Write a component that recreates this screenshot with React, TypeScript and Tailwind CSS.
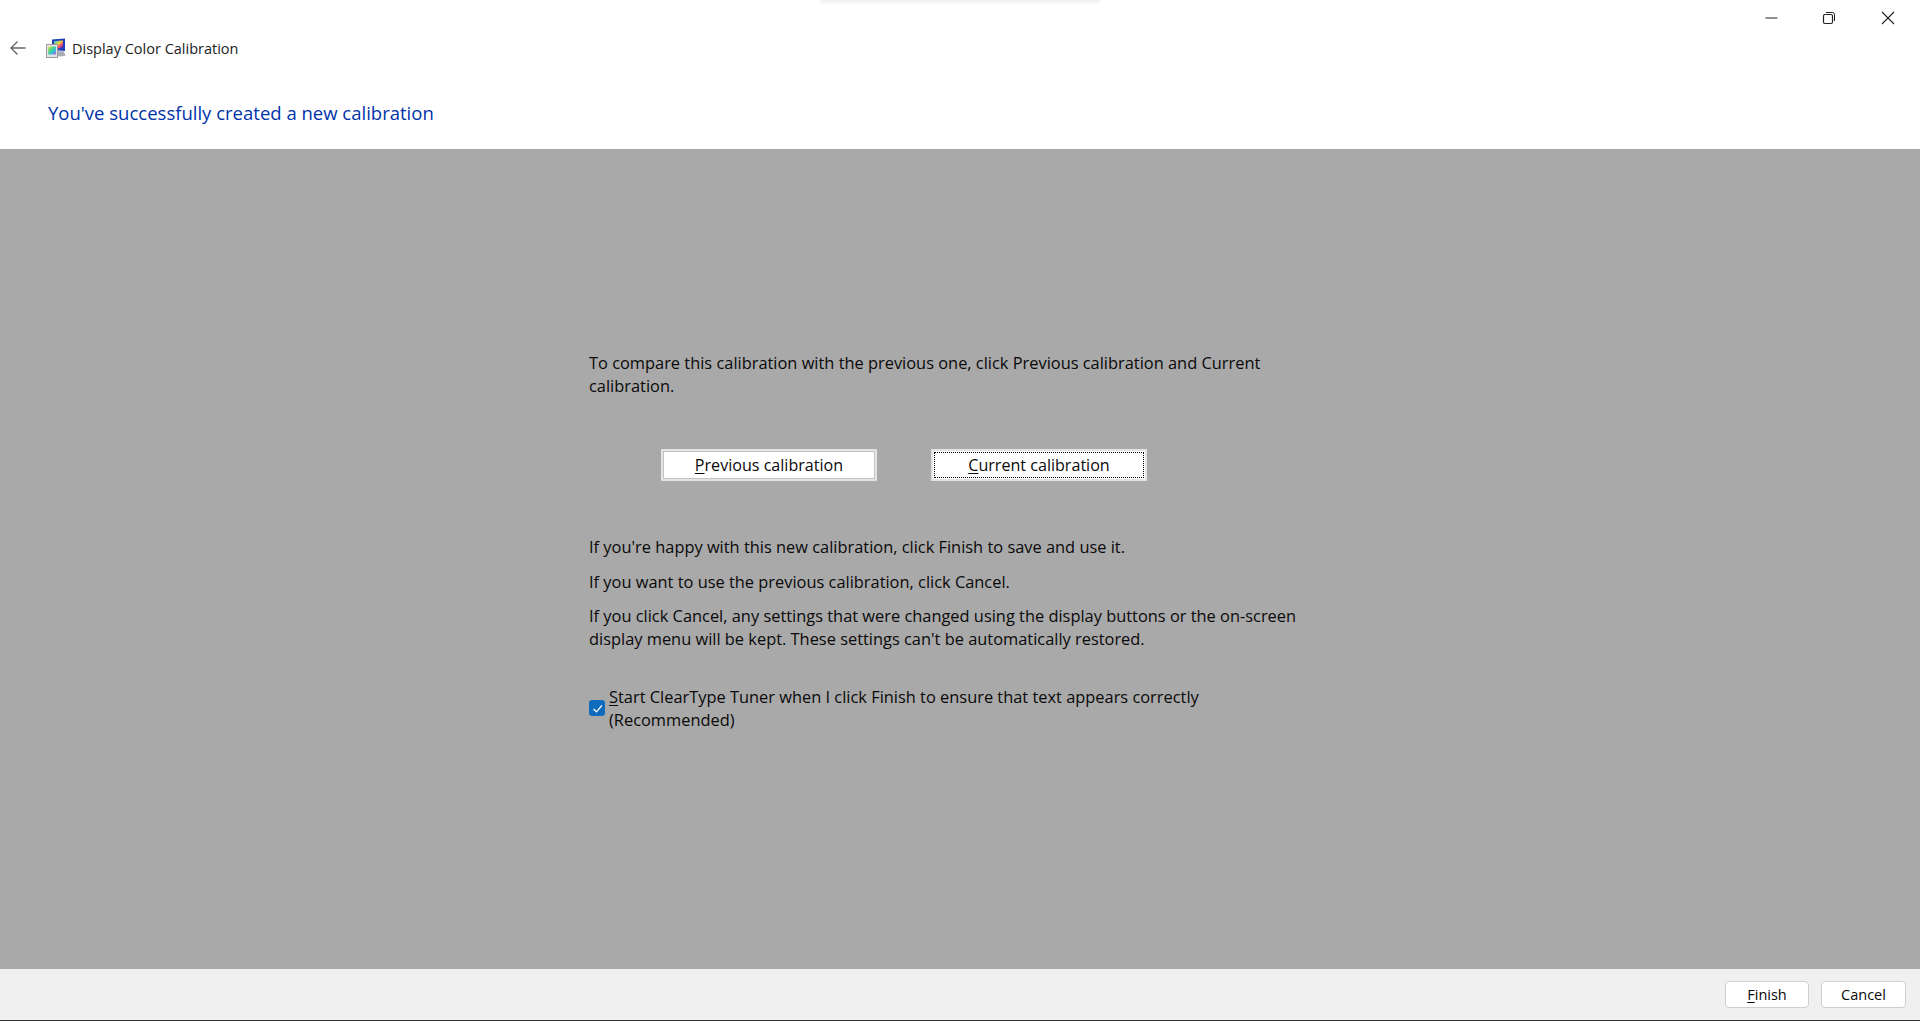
function Under({ c, rest }: { c: string; rest: string }) {
  return (
    <>
      <span className="underline underline-offset-2">{c}</span>
      {rest}
    </>
  );
}

function MonitorIcon() {
  return (
    <svg width="20" height="20" viewBox="0 0 20 20" className="shrink-0">
      <defs>
        <linearGradient id="scr" x1="0" y1="0" x2="1" y2="1">
          <stop offset="0" stopColor="#1fb6e8" />
          <stop offset="0.45" stopColor="#f5d33c" />
          <stop offset="0.7" stopColor="#e8417a" />
          <stop offset="1" stopColor="#1533c9" />
        </linearGradient>
        <linearGradient id="sq" x1="0" y1="0" x2="1" y2="1">
          <stop offset="0" stopColor="#f4e04a" />
          <stop offset="0.35" stopColor="#4fd67a" />
          <stop offset="0.7" stopColor="#32b8ea" />
          <stop offset="1" stopColor="#d94bb0" />
        </linearGradient>
      </defs>
      <path d="M6 1.5 L19 0.5 V13 L6 12 Z" fill="#1d3fb8" />
      <path d="M8 3 L17 2.5 V10.5 L8 10 Z" fill="url(#scr)" />
      <path d="M11 13 L18 13.5 L19.5 18 L12 18.5 Z" fill="#a8acb4" />
      <rect x="0.5" y="6.5" width="11" height="13" fill="#e4e4e4" stroke="#9a9a9a" />
      <rect x="2.2" y="8.5" width="7.8" height="8" fill="url(#sq)" />
    </svg>
  );
}

export default function App() {
  return (
    <div className="h-[1021px] w-[1920px] flex flex-col overflow-hidden bg-white text-[16.4px] leading-[23px] text-[#0a0a0a] font-['Open_Sans','Noto_Sans',sans-serif]">
      <header className="h-[149px] shrink-0 relative flex flex-col">
        <div className="absolute top-0 left-[820px] w-[280px] h-[6px] rounded-b-[40px] bg-gradient-to-b from-[#f0f0f0] to-white" />
        <div className="h-[18px] shrink-0 flex justify-end items-start pr-[22px] pt-[8px] gap-[38px]">
          <svg width="20" height="20" viewBox="0 0 20 20" className="shrink-0 -mr-[0px]"><path d="M3.5 10H15.5" stroke="#222" strokeWidth="1" /></svg>
          <svg width="20" height="20" viewBox="0 0 20 20" className="shrink-0"><rect x="3.5" y="6.5" width="9" height="9" rx="1.5" fill="none" stroke="#222" strokeWidth="1.2" /><path d="M6 4.5H12.5Q14.5 4.5 14.5 6.5V13" fill="none" stroke="#222" strokeWidth="1" /></svg>
          <svg width="20" height="20" viewBox="0 0 20 20" className="shrink-0"><path d="M4 4L16 16M16 4L4 16" stroke="#222" strokeWidth="1.1" /></svg>
        </div>
        <div className="flex items-center h-[62px] pl-[8px] -mt-[1px]">
          <svg width="20" height="20" viewBox="0 0 20 20"><path d="M17.5 10H3M9.5 3.5L3 10L9.5 16.5" fill="none" stroke="#666" strokeWidth="1.4" /></svg>
          <div className="ml-[18px] mr-[6px]"><MonitorIcon /></div>
          <span className="text-[14.5px] text-[#222]">Display Color Calibration</span>
        </div>
        <h1 className="pl-[48px] mt-[20px] text-[18.5px] leading-[28px] text-[#0033aa] font-normal">You've successfully created a new calibration</h1>
      </header>

      <main className="flex-1 bg-[#a9a9a9] pl-[589px] pt-[202px]">
        <div className="w-[716px]">
          <p>To compare this calibration with the previous one, click Previous calibration and Current calibration.</p>
          <div className="flex gap-[54px] ml-[72px] mt-[52px] text-[16.1px]">
            <button className="w-[216px] h-[32px] bg-white border-[2px] border-[#e4e4e4] rounded-[1px] flex items-center justify-center shadow-[inset_0_0_0_1px_#c4c4c4]">
              <span><Under c="P" rest="revious calibration" /></span>
            </button>
            <button className="w-[216px] h-[32px] bg-white border-[2px] border-[#e4e4e4] flex items-center justify-center outline-dotted outline-1 outline-black -outline-offset-[4px]">
              <span><Under c="C" rest="urrent calibration" /></span>
            </button>
          </div>
          <p className="mt-[54px]">If you're happy with this new calibration, click Finish to save and use it.</p>
          <p className="mt-[12px]">If you want to use the previous calibration, click Cancel.</p>
          <p className="mt-[11px]">If you click Cancel, any settings that were changed using the display buttons or the on-screen display menu will be kept. These settings can't be automatically restored.</p>
          <div className="flex items-center mt-[35px] gap-[4px]">
            <span className="w-[16px] h-[16px] shrink-0 rounded-[3px] bg-[#0f6cbd] flex items-center justify-center">
              <svg width="11" height="11" viewBox="0 0 11 11"><path d="M1.5 6L4.5 8.8L9.8 2.5" fill="none" stroke="#fff" strokeWidth="1.2" /></svg>
            </span>
            <span><Under c="S" rest="tart ClearType Tuner when I click Finish to ensure that text appears correctly" /><br />(Recommended)</span>
          </div>
        </div>
      </main>

      <footer className="h-[52px] shrink-0 bg-[#f0f0f0] border-b border-[#333] flex items-start justify-end gap-[12px] pr-[14px] pt-[12px] text-[14.5px]">
        <button className="w-[84px] h-[27px] bg-white border border-[#cfcfcf] rounded-[4px] flex items-center justify-center"><span><Under c="F" rest="inish" /></span></button>
        <button className="w-[85px] h-[27px] bg-white border border-[#cfcfcf] rounded-[4px] flex items-center justify-center">Cancel</button>
      </footer>
    </div>
  );
}
